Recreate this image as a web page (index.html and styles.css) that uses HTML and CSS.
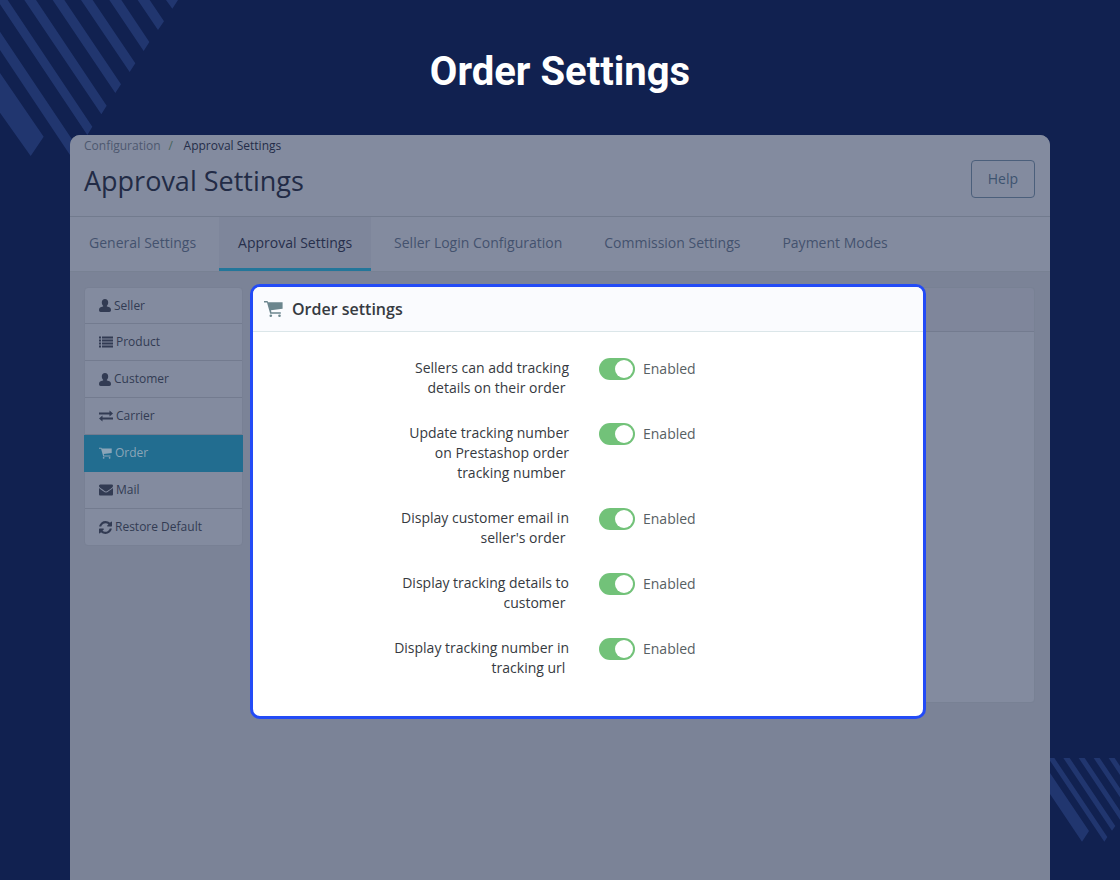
FILE: index.html
```html
<!DOCTYPE html>
<html lang="en">
<head>
<meta charset="UTF-8">
<meta name="viewport" content="width=device-width, initial-scale=1.0">
<title>Order Settings</title>
<link rel="stylesheet" href="styles.css">
</head>
<body>

<!-- shared icons -->
<svg class="sprite" aria-hidden="true">
    <symbol id="user" viewBox="0 0 12 13"><path d="M6 0C8 0 9.200 1.400 9.200 3.400 9.200 4.800 8.600 6.200 7.700 6.900L8 7.600C10.500 8 12 8.800 12 11 12 12.300 11.400 13 10.300 13H1.700C.6 13 0 12.300 0 11 0 8.800 1.500 8 4 7.600L4.300 6.900C3.400 6.200 2.800 4.800 2.800 3.400 2.800 1.400 4 0 6 0z"/></symbol>
    <symbol id="list" viewBox="0 0 14 11"><path d="M0 0h2v2H0zM3 0h11v2H3zM0 3h2v2H0zM3 3h11v2H3zM0 6h2v2H0zM3 6h11v2H3zM0 9h2v2H0zM3 9h11v2H3z"/></symbol>
    <symbol id="exchange" viewBox="0 0 14 11"><path d="M0 2h10.500V0L14 3 10.500 6V4H0zM14 7H3.500V5L0 8 3.500 11V9H14z"/></symbol>
    <symbol id="cart" viewBox="0 0 19 17"><path d="M0 0h3.500l.6 1.200H18.600v6.500L7 9.200l.4 2.100h9.400v1.500H6.200L3 1.400H0z"/><circle cx="6.800" cy="14.800" r="1.300"/><circle cx="15.500" cy="14.800" r="1.300"/></symbol>
    <symbol id="mail" viewBox="0 256 1792 1408"><path d="M1792 710v794q0 66-47 113t-113 47h-1472q-66 0-113-47t-47-113v-794q44 49 101 87 362 246 497 345 57 42 92.500 65.500t94.500 48 110 24.500h2q51 0 110-24.500t94.500-48 92.500-65.500q170-123 498-345 57-39 100-87zm0-294q0 79-49 151t-122 123q-376 261-468 325-10 7-42.500 31t-54 38.500-52 32.500-57.500 27-50 9h-2q-23 0-50-9t-57.500-27-52-32.500-54-38.500-42.500-31q-91-64-262-182.500t-205-142.500q-62-42-117-115.500t-55-136.500q0-78 41.500-130t118.500-52h1472q65 0 112.500 47t47.500 113z"/></symbol>
    <symbol id="refresh" viewBox="0 128 1536 1536"><path d="M1511 1056q0 5-1 7-64 268-268 434.500t-478 166.500q-146 0-282.500-55t-243.500-157l-129 129q-19 19-45 19t-45-19-19-45v-448q0-26 19-45t45-19h448q26 0 45 19t19 45-19 45l-137 137q71 66 161 102t187 36q134 0 250-65t186-179q11-17 53-117 8-23 30-23h192q13 0 22.500 9.500t9.500 22.500zm25-800v448q0 26-19 45t-45 19h-448q-26 0-45-19t-19-45 19-45l138-138q-148-137-349-137-134 0-250 65t-186 179q-11 17-53 117-8 23-30 23h-199q-13 0-22.500-9.500t-9.500-22.500v-7q65-268 270-434.500t480-166.500q146 0 284 55.500t245 156.500l130-129q19-19 45-19t45 19 19 45z"/></symbol>
</svg>

<svg class="stripes stripes-top" viewBox="0 0 600 480" aria-hidden="true">
    <path d="M0 219L131 410 92 468 0 338zM0 95L248 466 230 495 0 150zM0 0H23L277 380 262 405 0 13zM73 0H108L320 317 304 343zM158 0H193L363 253 346 279zM243 0H278L406 190 389 216zM328 0H364L448 126 431 153zM413 0H449L492 64 474 90zM498 0H534L517 26z"/>
</svg>
<svg class="stripes stripes-bottom" viewBox="0 0 210 252" aria-hidden="true">
    <path d="M0 45L117 219 96 251 0 108zM0 0H13L172 237 163 251 0 8zM40 0H59L196 204 186 218zM86 0H104L210 158V185zM131 0H149L210 91V118zM176 0H194L210 24V51z"/>
</svg>

<h1 class="page-title">Order Settings</h1>

<div class="window">
    <header class="header">
        <div>
            <nav class="breadcrumb">
                <a href="#">Configuration</a><span class="slash">/</span><a href="#" class="current">Approval Settings</a>
            </nav>
            <h2 class="title">Approval Settings</h2>
        </div>
        <button class="help" type="button">Help</button>
    </header>

    <nav class="tabs">
        <a href="#">General Settings</a>
        <a href="#" class="active">Approval Settings</a>
        <a href="#">Seller Login Configuration</a>
        <a href="#">Commission Settings</a>
        <a href="#">Payment Modes</a>
    </nav>

    <main class="main">
        <nav class="menu">
            <a href="#"><svg class="icon-user"><use href="#user"/></svg>Seller</a>
            <a href="#"><svg class="icon-wide"><use href="#list"/></svg>Product</a>
            <a href="#"><svg class="icon-user"><use href="#user"/></svg>Customer</a>
            <a href="#"><svg class="icon-wide"><use href="#exchange"/></svg>Carrier</a>
            <a href="#" class="active"><svg class="icon-square"><use href="#cart"/></svg>Order</a>
            <a href="#"><svg class="icon-wide"><use href="#mail"/></svg>Mail</a>
            <a href="#"><svg class="icon-square"><use href="#refresh"/></svg>Restore Default</a>
        </nav>

        <div class="content">
            <div class="card"></div>
            <section class="panel">
                <h3 class="panel-title"><svg><use href="#cart"/></svg>Order settings</h3>
                <form class="settings">
                    <div class="setting">
                        <label for="tracking">Sellers can add tracking details on their order&nbsp;</label>
                        <input type="checkbox" id="tracking" checked>
                        <span class="state">Enabled</span>
                    </div>
                    <div class="setting">
                        <label for="update">Update tracking number on Prestashop order tracking number&nbsp;</label>
                        <input type="checkbox" id="update" checked>
                        <span class="state">Enabled</span>
                    </div>
                    <div class="setting">
                        <label for="email">Display customer email in seller's order&nbsp;</label>
                        <input type="checkbox" id="email" checked>
                        <span class="state">Enabled</span>
                    </div>
                    <div class="setting">
                        <label for="details">Display tracking details to customer&nbsp;</label>
                        <input type="checkbox" id="details" checked>
                        <span class="state">Enabled</span>
                    </div>
                    <div class="setting">
                        <label for="url">Display tracking number in tracking url&nbsp;</label>
                        <input type="checkbox" id="url" checked>
                        <span class="state">Enabled</span>
                    </div>
                </form>
            </section>
        </div>
    </main>
</div>

</body>
</html>
```
FILE: styles.css
```css
* {
    box-sizing: border-box;
}
body {
    margin: 0;
    min-height: 100vh;
    display: flex;
    flex-direction: column;
    position: relative;
    background-color: #112150;
    color: #2c3550;
    font-family: "Open Sans", "Noto Sans", sans-serif;
    font-size: 14px;
    line-height: 20px;
}
a {
    color: inherit;
    text-decoration: none;
}
svg {
    fill: currentColor;
    flex: none;
}
.sprite {
    position: absolute;
    width: 0;
    height: 0;
}

/* background decoration */
.stripes {
    position: absolute;
    color: #21366f;
}
.stripes-top {
    top: 0;
    left: 0;
    width: 200px;
    height: 160px;
}
.stripes-bottom {
    right: 0;
    bottom: 38px;
    width: 70px;
    height: 84px;
}
.page-title {
    margin: 0;
    padding: 48px 0 39px;
    color: #fff;
    font-family: Roboto, sans-serif;
    font-size: 40px;
    font-weight: 700;
    line-height: 48px;
    text-align: center;
}

/* window */
.window {
    position: relative;
    flex: 1;
    margin: 0 70px;
    background-color: #7b8397;
    border-radius: 10px 10px 0 0;
    overflow: hidden;
}
.header {
    display: flex;
    justify-content: space-between;
    align-items: flex-end;
    padding: 1px 15px 18px 14px;
    background-color: #838b9f;
    border-bottom: 1px solid #727b8e;
}
.breadcrumb {
    display: flex;
    color: #4d586f;
    font-size: 12px;
}
.slash {
    width: 23px;
    padding-left: 8px;
    color: #46645b;
}
.breadcrumb .current {
    color: #242d49;
}
.title {
    margin: 8px 0 0;
    color: #222b46;
    font-size: 27px;
    font-weight: 400;
    line-height: 34px;
}
.help {
    padding: 7px 16px;
    background: none;
    border: 1px solid #4b5f7b;
    border-radius: 4px;
    color: #3d536f;
    font: 500 14px/22px "Open Sans", sans-serif;
}
.tabs {
    display: flex;
    gap: 4px;
    background-color: #838b9f;
    border-bottom: 1px solid #788193;
    color: #43526e;
}
.tabs a {
    padding: 16px 19px 15px;
    border-bottom: 3px solid transparent;
}
.tabs .active {
    background-color: #7e869b;
    border-color: #23769a;
    color: #272f4b;
}

.main {
    display: flex;
    gap: 7px;
    padding: 12px 15px 20px 14px;
}
.menu {
    flex: 0 0 159px;
    align-self: flex-start;
    margin-top: 3px;
    background-color: #838b9f;
    border: 1px solid #788094;
    border-radius: 4px;
    color: #323b53;
    font-size: 12px;
}
.menu a {
    display: flex;
    align-items: center;
    gap: 3px;
    height: 37px;
    padding-left: 14px;
    border-bottom: 1px solid #737b8f;
}
.menu a:first-child,
.menu a:last-child {
    height: 36px;
}
.menu a:last-child {
    border-bottom: 0;
}
.menu .active {
    margin: 0 -1px;
    padding-left: 15px;
    background-color: #226d90;
    border-color: #226d90;
    color: #8ba5b8;
}
.icon-user {
    width: 12px;
    height: 13px;
}
.icon-wide {
    width: 14px;
    height: 12px;
}
.icon-square {
    width: 13px;
    height: 13px;
}

/* the panel is laid over the dimmed card in the same cell */
.content {
    flex: 1;
    display: grid;
    grid-template-columns: minmax(0, 676px) 1fr;
}
.card {
    grid-area: 1 / 1 / 2 / 3;
    margin: 3px 0 16px 8px;
    background: linear-gradient(#7f869b 43px, #737b8f 43px, #737b8f 44px, #838b9f 44px);
    border: 1px solid #788194;
    border-radius: 4px;
}
.panel {
    grid-area: 1 / 1 / 2 / 2;
    position: relative;
    background-color: #fff;
    border: 3px solid #234bf6;
    border-radius: 10px;
    overflow: hidden;
}
.panel-title {
    display: flex;
    align-items: center;
    gap: 9px;
    margin: 0;
    padding: 10px 11px;
    background-color: #fafbfe;
    border-bottom: 1px solid #dbe6e9;
    color: #363a41;
    font-size: 16px;
    font-weight: 600;
    line-height: 24px;
}
.panel-title svg {
    width: 19px;
    height: 17px;
    color: #6c868e;
}
.settings {
    display: flex;
    flex-direction: column;
    gap: 25px;
    padding: 26px 0 38px;
}
.setting {
    display: flex;
    align-items: flex-start;
}
.setting label {
    width: 316px;
    padding-left: 136px;
    color: #363a41;
    text-align: right;
}
.setting input {
    appearance: none;
    display: flex;
    justify-content: flex-end;
    width: 36px;
    height: 22px;
    margin: 0 8px 0 30px;
    padding: 2px;
    background-color: #72c279;
    border-radius: 11px;
}
.setting input::after {
    content: "";
    width: 18px;
    height: 18px;
    background-color: #fff;
    border-radius: 50%;
}
.state {
    color: #576063;
    line-height: 22px;
}
```
